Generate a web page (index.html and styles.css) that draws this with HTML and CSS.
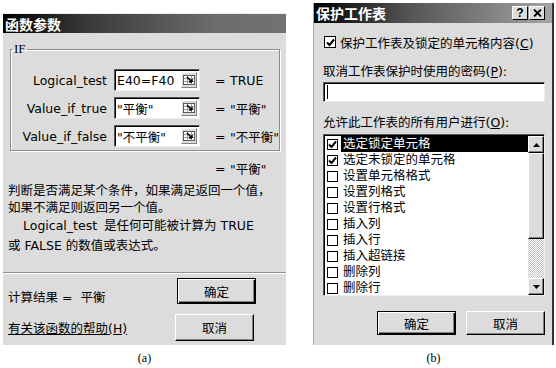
FILE: index.html
```html
<!DOCTYPE html>
<html lang="zh-CN">
<head>
    <meta charset="UTF-8">
    <title>函数参数 / 保护工作表</title>
    <link rel="stylesheet" href="styles.css">
</head>
<body>

<div class="page">
    <!-- (a) Function arguments dialog -->
    <div class="figure fig-a">
        <div class="dialog dialog-args">
            <div class="titlebar title-a">函数参数</div>

            <fieldset class="group">
                <legend>IF</legend>
                <div class="arg-row">
                    <span class="arg-name">Logical_test</span>
                    <span class="arg-input">
                        <span class="arg-text">E40=F40</span>
                        <svg class="ref-btn" width="16" height="16" viewBox="0 0 16 16">
                            <rect x="0.5" y="0.5" width="15" height="15" fill="#dcdcdc" stroke="#808080"/>
                            <path d="M0.5 15.5V0.5H15.5" stroke="#fff" fill="none"/>
                            <rect x="2.5" y="3.5" width="11" height="9" fill="#fff" stroke="#555"/>
                            <path d="M2.5 6.5H13.5M2.5 9.5H13.5M6.5 3.5V12.5M10.5 3.5V12.5" stroke="#999"/>
                            <path d="M6 5L11 10M11 10V7M11 10H8" stroke="#000" stroke-width="1.5" fill="none"/>
                        </svg>
                    </span>
                    <span class="eq">=</span>
                    <span class="arg-value">TRUE</span>
                </div>
                <div class="arg-row">
                    <span class="arg-name">Value_if_true</span>
                    <span class="arg-input">
                        <span class="arg-text">&quot;平衡&quot;</span>
                        <svg class="ref-btn" width="16" height="16" viewBox="0 0 16 16">
                            <rect x="0.5" y="0.5" width="15" height="15" fill="#dcdcdc" stroke="#808080"/>
                            <path d="M0.5 15.5V0.5H15.5" stroke="#fff" fill="none"/>
                            <rect x="2.5" y="3.5" width="11" height="9" fill="#fff" stroke="#555"/>
                            <path d="M2.5 6.5H13.5M2.5 9.5H13.5M6.5 3.5V12.5M10.5 3.5V12.5" stroke="#999"/>
                            <path d="M6 5L11 10M11 10V7M11 10H8" stroke="#000" stroke-width="1.5" fill="none"/>
                        </svg>
                    </span>
                    <span class="eq">=</span>
                    <span class="arg-value">&quot;平衡&quot;</span>
                </div>
                <div class="arg-row">
                    <span class="arg-name">Value_if_false</span>
                    <span class="arg-input">
                        <span class="arg-text">&quot;不平衡&quot;</span>
                        <svg class="ref-btn" width="16" height="16" viewBox="0 0 16 16">
                            <rect x="0.5" y="0.5" width="15" height="15" fill="#dcdcdc" stroke="#808080"/>
                            <path d="M0.5 15.5V0.5H15.5" stroke="#fff" fill="none"/>
                            <rect x="2.5" y="3.5" width="11" height="9" fill="#fff" stroke="#555"/>
                            <path d="M2.5 6.5H13.5M2.5 9.5H13.5M6.5 3.5V12.5M10.5 3.5V12.5" stroke="#999"/>
                            <path d="M6 5L11 10M11 10V7M11 10H8" stroke="#000" stroke-width="1.5" fill="none"/>
                        </svg>
                    </span>
                    <span class="eq">=</span>
                    <span class="arg-value">&quot;不平衡&quot;</span>
                </div>
            </fieldset>

            <div class="result-row">
                <span class="eq">=</span>
                <span class="arg-value">&quot;平衡&quot;</span>
            </div>

            <p class="desc">判断是否满足某个条件，如果满足返回一个值，<br>如果不满足则返回另一个值。</p>
            <p class="desc-arg"><span class="arg-label">Logical_test</span>是任何可能被计算为 TRUE<br>或 FALSE 的数值或表达式。</p>

            <div class="separator"></div>

            <div class="footer-row row-ok">
                <span class="calc">计算结果 = &nbsp;平衡</span>
                <button class="btn btn-default">确定</button>
            </div>
            <div class="footer-row row-cancel">
                <a class="help">有关该函数的帮助(H)</a>
                <button class="btn">取消</button>
            </div>
        </div>
        <div class="caption">(a)</div>
    </div>

    <!-- (b) Protect sheet dialog -->
    <div class="figure fig-b">
        <div class="dialog dialog-protect">
            <div class="titlebar title-b">
                <span>保护工作表</span>
                <span class="title-btns">
                    <span class="title-btn">?</span>
                    <span class="title-btn">
                        <svg width="9" height="8" viewBox="0 0 9 8">
                            <path d="M1 0.5L8 7.5M8 0.5L1 7.5" stroke="#000" stroke-width="1.8"/>
                        </svg>
                    </span>
                </span>
            </div>

            <div class="protect-body">
                <div class="check-row">
                    <span class="check">
                        <svg width="9" height="9" viewBox="0 0 9 9"><path d="M1 4.5L3.5 7L8 1.5" stroke="#000" stroke-width="2" fill="none"/></svg>
                    </span>
                    <span class="check-text">保护工作表及锁定的单元格内容(<u>C</u>)</span>
                </div>

                <div class="field-label">取消工作表保护时使用的密码(<u>P</u>):</div>
                <div class="password"><span class="caret"></span></div>

                <div class="field-label label-allow">允许此工作表的所有用户进行(<u>O</u>):</div>

                <div class="list">
                    <div class="list-items">
                        <div class="list-item">
                            <span class="item-box"><svg width="9" height="9" viewBox="0 0 9 9"><path d="M1 4.5L3.5 7L8 1.5" stroke="#000" stroke-width="2" fill="none"/></svg></span>
                            <span class="item-text selected">选定锁定单元格</span>
                        </div>
                        <div class="list-item">
                            <span class="item-box"><svg width="9" height="9" viewBox="0 0 9 9"><path d="M1 4.5L3.5 7L8 1.5" stroke="#000" stroke-width="2" fill="none"/></svg></span>
                            <span class="item-text">选定未锁定的单元格</span>
                        </div>
                        <div class="list-item"><span class="item-box"></span><span class="item-text">设置单元格格式</span></div>
                        <div class="list-item"><span class="item-box"></span><span class="item-text">设置列格式</span></div>
                        <div class="list-item"><span class="item-box"></span><span class="item-text">设置行格式</span></div>
                        <div class="list-item"><span class="item-box"></span><span class="item-text">插入列</span></div>
                        <div class="list-item"><span class="item-box"></span><span class="item-text">插入行</span></div>
                        <div class="list-item"><span class="item-box"></span><span class="item-text">插入超链接</span></div>
                        <div class="list-item"><span class="item-box"></span><span class="item-text">删除列</span></div>
                        <div class="list-item"><span class="item-box"></span><span class="item-text">删除行</span></div>
                    </div>
                    <div class="scrollbar">
                        <div class="sb-btn">
                            <svg width="7" height="4" viewBox="0 0 7 4"><path d="M3.5 0L7 4H0Z" fill="#000"/></svg>
                        </div>
                        <div class="sb-thumb"></div>
                        <div class="sb-track"></div>
                        <div class="sb-btn">
                            <svg width="7" height="4" viewBox="0 0 7 4"><path d="M0 0H7L3.5 4Z" fill="#000"/></svg>
                        </div>
                    </div>
                </div>

                <div class="protect-buttons">
                    <button class="btn btn-default">确定</button>
                    <button class="btn">取消</button>
                </div>
            </div>
        </div>
        <div class="caption">(b)</div>
    </div>
</div>

</body>
</html>
```

FILE: styles.css
```css
body {
    margin: 0;
    background-color: #fff;
    font-family: "DejaVu Sans", "Noto Sans CJK SC", sans-serif;
    font-size: 12.5px;
    color: #000;
}

.page {
    display: flex;
    align-items: flex-start;
}

.fig-a {
    width: 283px;
    margin-left: 3px;
    padding-top: 13px;
}

.fig-b {
    width: 241px;
    margin-left: 27px;
    padding-top: 3px;
}

.caption {
    text-align: center;
    font-family: "Liberation Serif", serif;
    font-size: 12px;
    line-height: 14px;
    margin-top: 6px;
}

.dialog {
    background-color: #dcdcdc;
    box-sizing: border-box;
}

.dialog-args {
    height: 332px;
    border-top: 1px solid #eee;
}

.dialog-protect {
    height: 342px;
    border-left: 1px solid #a8a8a8;
    border-right: 2px solid #333;
}

/* title bars */
.titlebar {
    height: 20px;
    display: flex;
    align-items: center;
    color: #fff;
    font-weight: bold;
    font-size: 14px;
    padding-left: 2px;
}

.title-a {
    height: 19px;
    background: linear-gradient(90deg, #000, #3a3a3a 30%, #6c6c6c 75%, #727272);
}

.title-b {
    background: linear-gradient(90deg, #000, #555 40%, #a4a4a4);
}

.title-btns {
    margin-left: auto;
    margin-right: 7px;
    display: flex;
    gap: 1px;
}

.title-btn {
    width: 16px;
    height: 14px;
    box-sizing: border-box;
    background-color: #dcdcdc;
    border: 1px solid;
    border-color: #fff #000 #000 #fff;
    color: #000;
    font-family: "Liberation Sans", sans-serif;
    font-size: 12px;
    line-height: 12px;
    text-align: center;
    display: flex;
    align-items: center;
    justify-content: center;
}

/* IF group */
.group {
    margin: 8px 6px 0 7px;
    padding: 12px 0 3px 0;
    border: 1px solid #8c8c8c;
    box-shadow: inset 1px 1px #fff, 1px 1px #fff;
}

.group legend {
    padding: 0 1px;
    margin-left: 2px;
    font-family: "Liberation Serif", serif;
    font-size: 13px;
}

.arg-row {
    display: flex;
    align-items: center;
    height: 22px;
}

.arg-row + .arg-row {
    margin-top: 6px;
}

.arg-name {
    width: 96px;
    text-align: right;
}

.arg-input {
    margin-left: 7px;
    width: 86px;
    height: 22px;
    box-sizing: border-box;
    background-color: #fff;
    border: 1px solid;
    border-color: #555 #eee #eee #555;
    box-shadow: inset 1px 1px #000;
    display: flex;
    align-items: center;
    padding-left: 2px;
}

.arg-text {
    flex: 1;
    white-space: nowrap;
    overflow: hidden;
}

.ref-btn {
    margin-right: 2px;
}

.eq {
    margin-left: 15px;
    width: 8px;
}

.arg-value {
    margin-left: 7px;
    white-space: nowrap;
}

.result-row {
    display: flex;
    align-items: center;
    height: 17px;
    padding-left: 197px;
    margin-top: 9px;
}

.desc {
    margin: 5px 0 0 5px;
    line-height: 17px;
}

.desc-arg {
    margin: 0 0 0 5px;
    line-height: 20px;
    text-indent: 15px;
}

.arg-label {
    margin-right: 7px;
}

.separator {
    margin-top: 16px;
    height: 1px;
    background-color: #909090;
    border-bottom: 1px solid #fff;
}

.footer-row {
    display: flex;
    align-items: center;
    justify-content: space-between;
    padding-left: 5px;
}

.row-ok {
    height: 26px;
    margin-top: 4px;
    padding-right: 30px;
}

.row-cancel {
    height: 27px;
    margin-top: 10px;
    padding-right: 32px;
}

.calc {
    margin-top: 10px;
}

.help {
    color: #000;
    text-decoration: underline;
}

/* buttons */
.btn {
    width: 79px;
    height: 100%;
    font: inherit;
    color: #000;
    background-color: #dcdcdc;
    border: 1px solid;
    border-color: #fff #000 #000 #fff;
    box-shadow: inset -1px -1px #808080;
    padding: 0;
}

.btn-default {
    border: 1px solid #000;
    box-shadow: inset 1px 1px #fff, inset -1px -1px #000, inset -2px -2px #808080;
}

/* protect sheet */
.protect-body {
    padding: 0 7px 0 9px;
}

.check-row {
    display: flex;
    align-items: center;
    height: 16px;
    margin-top: 11px;
}

.check, .item-box {
    box-sizing: border-box;
    background-color: #fff;
    border: 1px solid #000;
    display: flex;
    align-items: center;
    justify-content: center;
}

.check {
    width: 12px;
    height: 12px;
    margin-left: 1px;
}

.check-text {
    margin-left: 4px;
}

.field-label {
    margin-top: 14px;
    line-height: 16px;
}

.label-allow {
    margin-top: 13px;
}

.password {
    margin-top: 2px;
    height: 20px;
    box-sizing: border-box;
    background-color: #fff;
    border: 1px solid;
    border-color: #555 #eee #eee #555;
    box-shadow: inset 1px 1px #000;
    display: flex;
    align-items: center;
    padding-left: 3px;
}

.caret {
    width: 1px;
    height: 14px;
    background-color: #000;
}

.list {
    margin-top: 3px;
    height: 162px;
    box-sizing: border-box;
    background-color: #fff;
    border: 1px solid;
    border-color: #555 #eee #eee #555;
    box-shadow: inset 1px 1px #000;
    display: flex;
    padding: 1px 0 0 1px;
}

.list-items {
    flex: 1;
    overflow: hidden;
}

.list-item {
    display: flex;
    align-items: center;
    height: 16px;
}

.item-box {
    width: 11px;
    height: 11px;
    margin-left: 2px;
}

.item-text {
    flex: 1;
    margin-left: 3px;
    padding-left: 2px;
    line-height: 16px;
    white-space: nowrap;
}

.item-text.selected {
    background-color: #000;
    color: #fff;
}

.scrollbar {
    width: 16px;
    display: flex;
    flex-direction: column;
}

.sb-btn, .sb-thumb {
    box-sizing: border-box;
    background-color: #dcdcdc;
    border: 1px solid;
    border-color: #fff #000 #000 #fff;
    box-shadow: inset -1px -1px #808080;
}

.sb-btn {
    height: 17px;
    display: flex;
    align-items: center;
    justify-content: center;
}

.sb-thumb {
    height: 86px;
}

.sb-track {
    flex: 1;
    background: repeating-conic-gradient(#fff 0 25%, #c4c4c4 0 50%) 0 0 / 2px 2px;
}

.protect-buttons {
    display: flex;
    justify-content: flex-end;
    gap: 10px;
    height: 24px;
    margin-top: 15px;
}
```
